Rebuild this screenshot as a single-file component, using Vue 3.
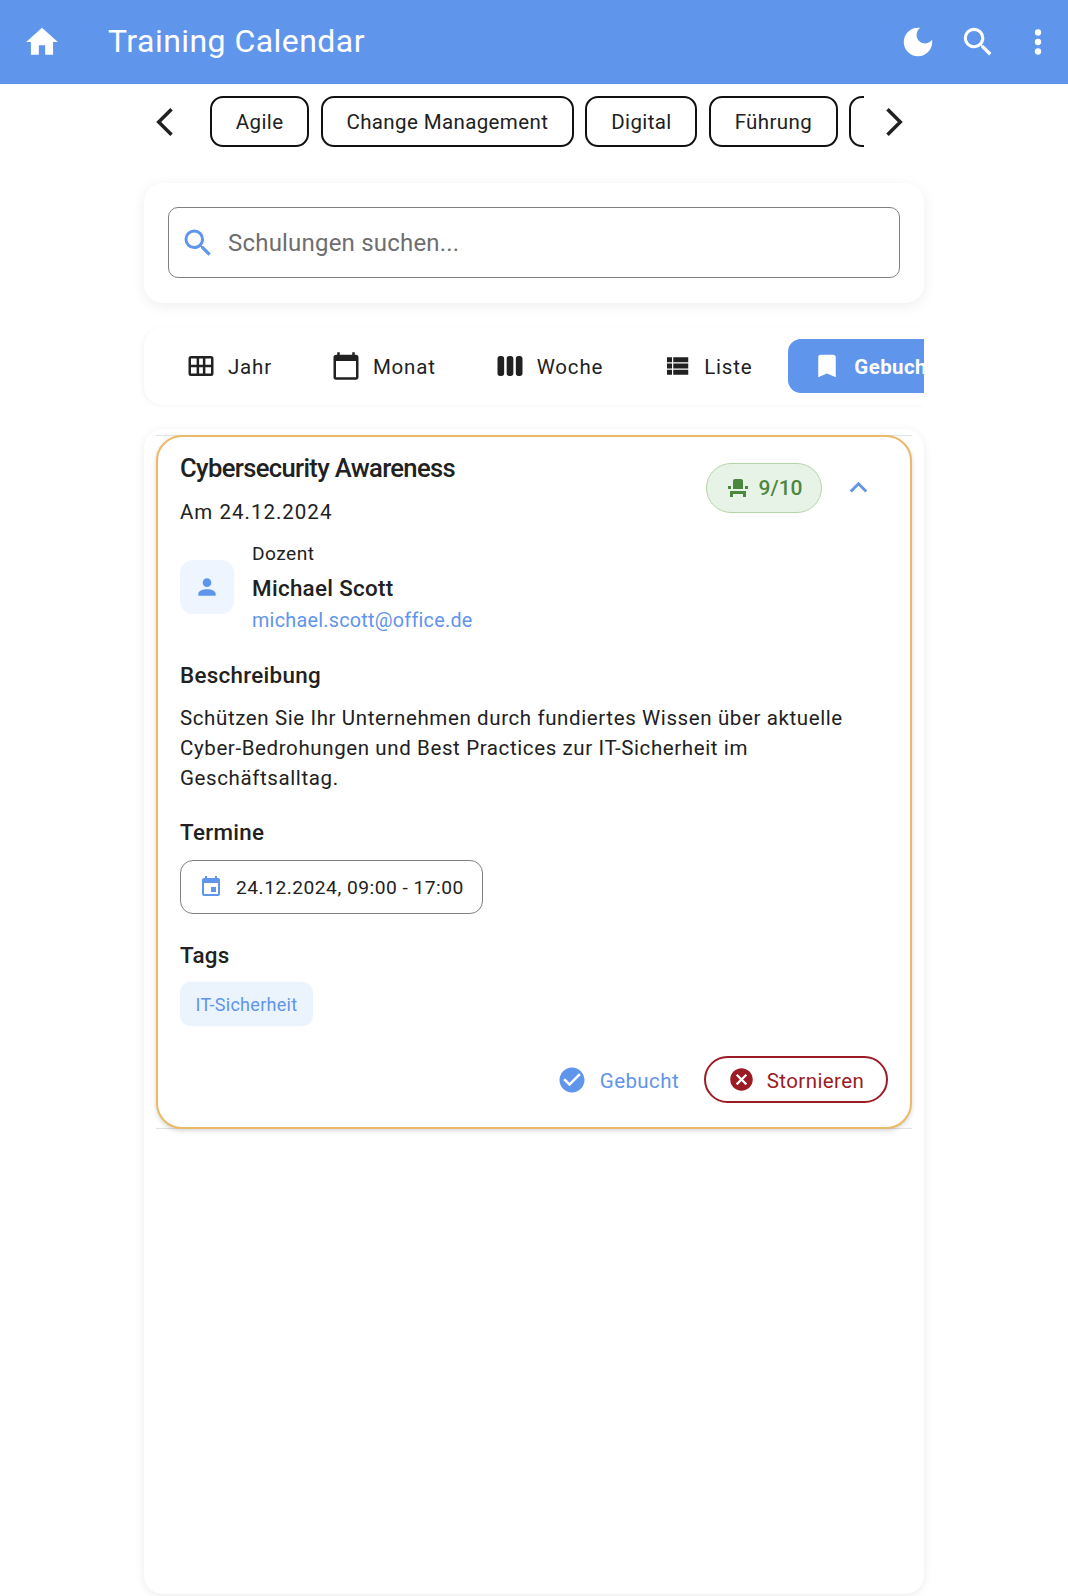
<script setup>
const chips = ['Agile', 'Change Management', 'Digital', 'Führung', 'Kommunikation']
const tabs = [
  { label: 'Jahr', icon: 'M4 4h16a2 2 0 0 1 2 2v12a2 2 0 0 1-2 2H4a2 2 0 0 1-2-2V6a2 2 0 0 1 2-2zm0 2v5h4.5V6H4zm6.5 0v5h3V6h-3zm5 0v5H20V6h-4.500zM4 13v5h4.500v-5H4zm6.500 0v5h3v-5h-3zm5 0v5H20v-5h-4.500z' },
  { label: 'Monat', icon: 'M20 3h-1V1h-2v2H7V1H5v2H4c-1.100 0-2 .9-2 2v16c0 1.100.9 2 2 2h16c1.100 0 2-.9 2-2V5c0-1.100-.9-2-2-2zm0 18H4V8h16v13z' },
  { label: 'Woche', icon: 'M5.330 20H4c-1.100 0-2-.9-2-2V6c0-1.100.9-2 2-2h1.330c1.100 0 2 .9 2 2v12c0 1.100-.9 2-2 2zM22 18V6c0-1.100-.9-2-2-2h-1.330c-1.100 0-2 .9-2 2v12c0 1.100.9 2 2 2H20c1.110 0 2-.9 2-2zm-7.330 0V6c0-1.100-.9-2-2-2h-1.330c-1.100 0-2 .9-2 2v12c0 1.100.9 2 2 2h1.330c1.100 0 2-.9 2-2z' },
  { label: 'Liste', icon: 'M9,5V9H21V5M9,19H21V15H9M9,14H21V10H9M4,9H8V5H4M4,19H8V15H4M4,14H8V10H4V14Z' },
  { label: 'Gebucht', icon: 'M17,3H7A2,2 0 0,0 5,5V21L12,18L19,21V5C19,3.890 18.100,3 17,3Z', active: true },
]
const paths = {
  home: 'M10,20V14H14V20H19V12H22L12,3L2,12H5V20H10Z',
  moon: 'M12 3c-4.970 0-9 4.030-9 9s4.030 9 9 9 9-4.030 9-9c0-.46-.04-.92-.1-1.360-.98 1.370-2.580 2.260-4.400 2.260-2.980 0-5.400-2.420-5.400-5.400 0-1.810.89-3.420 2.260-4.400-.44-.06-.9-.1-1.360-.1z',
  search: 'M9.500,3A6.500,6.500 0 0,1 16,9.500C16,11.110 15.410,12.590 14.440,13.730L14.710,14H15.500L20.500,19L19,20.500L14,15.500V14.710L13.730,14.440C12.590,15.410 11.110,16 9.500,16A6.500,6.500 0 0,1 3,9.500A6.500,6.500 0 0,1 9.500,3M9.500,5C7,5 5,7 5,9.500C5,12 7,14 9.500,14C12,14 14,12 14,9.500C14,7 12,5 9.500,5Z',
  dots: 'M12,16A2,2 0 0,1 14,18A2,2 0 0,1 12,20A2,2 0 0,1 10,18A2,2 0 0,1 12,16M12,10A2,2 0 0,1 14,12A2,2 0 0,1 12,14A2,2 0 0,1 10,12A2,2 0 0,1 12,10M12,4A2,2 0 0,1 14,6A2,2 0 0,1 12,8A2,2 0 0,1 10,6A2,2 0 0,1 12,4Z',
  left: 'M14.800,6.500L9.300,12L14.800,17.500',
  right: 'M9.200,6.500L14.700,12L9.200,17.500',
  seat: 'M4 18v3h3v-3h10v3h3v-6H4zm15-8h3v3h-3zM2 10h3v3H2zm15 3H7V5c0-1.100.9-2 2-2h6c1.100 0 2 .9 2 2v8z',
  up: 'M7.410,15.410L12,10.830L16.590,15.410L18,14L12,8L6,14L7.410,15.410Z',
  person: 'M12,4A4,4 0 0,1 16,8A4,4 0 0,1 12,12A4,4 0 0,1 8,8A4,4 0 0,1 12,4M12,14C16.420,14 20,15.790 20,18V20H4V18C4,15.790 7.580,14 12,14Z',
  calendar: 'M19,19H5V8H19M16,1V3H8V1H6V3H5C3.890,3 3,3.890 3,5V19A2,2 0 0,0 5,21H19A2,2 0 0,0 21,19V5C21,3.890 20.100,3 19,3H18V1M17,12H12V17H17V12Z',
  check: 'M12 2C6.500 2 2 6.500 2 12S6.500 22 12 22 22 17.500 22 12 17.500 2 12 2M10 17L5 12L6.410 10.590L10 14.170L17.590 6.580L19 8L10 17Z',
  cancel: 'M12,2C17.530,2 22,6.470 22,12C22,17.530 17.530,22 12,22C6.470,22 2,17.530 2,12C2,6.470 6.470,2 12,2M15.590,7L12,10.590L8.410,7L7,8.410L10.590,12L7,15.590L8.410,17L12,13.410L15.590,17L17,15.590L13.410,12L17,8.410L15.590,7Z',
}
</script>

<template>
  <div class="page">
    <header class="bar">
      <svg class="bar-icon home" viewBox="0 0 24 24"><path :d="paths.home" /></svg>
      <h1 class="title">Training Calendar</h1>
      <svg class="bar-icon moon" viewBox="0 0 24 24"><path :d="paths.moon" /></svg>
      <svg class="bar-icon" viewBox="0 0 24 24"><path :d="paths.search" /></svg>
      <svg class="bar-icon" viewBox="0 0 24 24"><path :d="paths.dots" /></svg>
    </header>

    <div class="chips-row">
      <svg class="arrow" viewBox="0 0 24 24"><path :d="paths.left" /></svg>
      <div class="chips">
        <div v-for="c in chips" :key="c" class="chip">{{ c }}</div>
      </div>
      <svg class="arrow" viewBox="0 0 24 24"><path :d="paths.right" /></svg>
    </div>

    <main class="content">
      <section class="search-card">
        <div class="field">
          <svg class="field-icon" viewBox="0 0 24 24"><path :d="paths.search" /></svg>
          <span class="placeholder">Schulungen suchen...</span>
        </div>
      </section>

      <nav class="tabs">
        <div v-for="t in tabs" :key="t.label" class="tab" :class="{ active: t.active }">
          <svg class="tab-icon" viewBox="0 0 24 24"><path :d="t.icon" /></svg>
          <span class="tab-label">{{ t.label }}</span>
        </div>
      </nav>

      <section class="list">
        <div class="list-item">
          <article class="card">
            <div class="card-head">
              <div class="head-text">
                <h2 class="card-title">Cybersecurity Awareness</h2>
                <div class="card-date">Am 24.12.2024</div>
              </div>
              <div class="seats">
                <svg class="seat-icon" viewBox="0 0 24 24"><path :d="paths.seat" /></svg>
                <span>9/10</span>
              </div>
              <svg class="collapse" viewBox="0 0 24 24"><path :d="paths.up" /></svg>
            </div>

            <div class="teacher">
              <div class="avatar">
                <svg class="avatar-icon" viewBox="0 0 24 24"><path :d="paths.person" /></svg>
              </div>
              <div class="teacher-text">
                <div class="teacher-label">Dozent</div>
                <div class="teacher-name">Michael Scott</div>
                <div class="teacher-mail">michael.scott@office.de</div>
              </div>
            </div>

            <h3 class="sec sec-desc">Beschreibung</h3>
            <p class="desc">Schützen Sie Ihr Unternehmen durch fundiertes Wissen über aktuelle Cyber-Bedrohungen und Best Practices zur IT-Sicherheit im Geschäftsalltag.</p>

            <h3 class="sec sec-dates">Termine</h3>
            <div class="date-chip">
              <svg class="date-icon" viewBox="0 0 24 24"><path :d="paths.calendar" /></svg>
              <span>24.12.2024, 09:00 - 17:00</span>
            </div>

            <h3 class="sec sec-tags">Tags</h3>
            <div class="tag">IT-Sicherheit</div>

            <div class="actions">
              <div class="booked">
                <svg class="action-icon" viewBox="0 0 24 24"><path :d="paths.check" /></svg>
                <span class="action-label">Gebucht</span>
              </div>
              <div class="cancel">
                <svg class="action-icon cancel-icon" viewBox="0 0 24 24"><path :d="paths.cancel" /></svg>
                <span class="action-label">Stornieren</span>
              </div>
            </div>
          </article>
        </div>
      </section>
    </main>
  </div>
</template>

<style scoped>
.page {
  width: 1068px;
  height: 1596px;
  overflow: hidden;
  background: #fff;
  font-family: Roboto, "Liberation Sans", sans-serif;
  color: #212121;
}
.bar {
  height: 84px;
  background: #5f95eb;
  display: flex;
  align-items: center;
  padding: 0 11px 0 23px;
  color: #fff;
}
.bar-icon {
  width: 38px;
  height: 38px;
  fill: #fff;
  flex: none;
  margin-left: 22px;
}
.bar-icon.home,
.bar-icon.moon {
  margin-left: 0;
}
.title {
  margin: 0 0 2px 47px;
  flex: 1;
  font-size: 32px;
  font-weight: 400;
  line-height: 1;
  letter-spacing: 0.450px;
}
.chips-row {
  height: 51px;
  margin-top: 12px;
  display: flex;
  align-items: center;
  padding-left: 137px;
}
.arrow {
  width: 56px;
  height: 56px;
  fill: none;
  stroke: #212121;
  stroke-width: 1.500;
  flex: none;
}
.chips {
  width: 654px;
  margin: 0 2px 0 17px;
  display: flex;
  gap: 11.400px;
  overflow: hidden;
}
.chip {
  flex: none;
  height: 51px;
  box-sizing: border-box;
  padding: 0 23.800px;
  border: 2px solid #111;
  border-radius: 13px;
  display: flex;
  align-items: center;
  font-size: 20.500px;
  letter-spacing: 0.380px;
}
.content {
  width: 780px;
  margin: 36px 0 0 144px;
}
.search-card {
  height: 120px;
  box-sizing: border-box;
  padding: 24px;
  background: #fff;
  border-radius: 19px;
  box-shadow: 0 3px 14px rgba(0, 0, 0, 0.07);
}
.field {
  height: 71px;
  box-sizing: border-box;
  border: 1.600px solid #808080;
  border-radius: 10px;
  display: flex;
  align-items: center;
  padding-left: 11px;
}
.field-icon {
  width: 36px;
  height: 36px;
  fill: #5f95eb;
  flex: none;
}
.placeholder {
  margin-left: 12px;
  font-size: 24px;
  color: #6e6e6e;
  letter-spacing: 0.2px;
}
.tabs {
  margin-top: 24px;
  height: 78px;
  box-sizing: border-box;
  padding: 12px 0 12px 18px;
  display: flex;
  gap: 11px;
  overflow: hidden;
  background: #fff;
  border-radius: 19px 0 0 19px;
  box-shadow: -2px 1px 4px rgba(0, 0, 0, 0.04);
}
.tab {
  flex: none;
  height: 54px;
  padding: 0 24px;
  display: flex;
  align-items: center;
  gap: 12px;
  font-size: 20.500px;
  letter-spacing: 0.800px;
  border-radius: 13px;
}
.tab-label {
  margin-top: 2px;
}
.tab-icon {
  width: 30px;
  height: 30px;
  fill: #212121;
  flex: none;
}
.tab.active {
  margin-left: 1px;
  background: #5f95eb;
  color: #fff;
  font-weight: 700;
  letter-spacing: 0.400px;
}
.tab.active .tab-icon {
  fill: #fff;
}
.list {
  margin-top: 24px;
  height: 1165px;
  box-sizing: border-box;
  padding: 6px 12px 0;
  background: #fff;
  border-radius: 19px;
  box-shadow: 0 2px 10px rgba(0, 0, 0, 0.08);
}
.list-item {
  border-top: 1px solid #e2e2e2;
  border-bottom: 1px solid #e2e2e2;
}
.card {
  height: 694px;
  margin: -1px 0;
  box-sizing: border-box;
  border: 2.400px solid #ebb968;
  border-radius: 26px;
  padding: 15px 22px 0;
  background: #fff;
  box-shadow: 0 2px 4px rgba(0, 0, 0, 0.16);
}
.card-head {
  display: flex;
  align-items: flex-start;
}
.head-text {
  flex: 1;
}
.card-title {
  margin: 0;
  font-size: 25.600px;
  font-weight: 500;
  line-height: 32px;
  letter-spacing: -0.650px;
}
.card-date {
  margin-top: 13px;
  font-size: 20.500px;
  line-height: 30px;
  letter-spacing: 1px;
}
.seats {
  margin: 11px 19px 0 0;
  width: 116px;
  height: 50px;
  box-sizing: border-box;
  border: 1.600px solid #b2d6a8;
  border-radius: 25px;
  background: #e8f3e8;
  color: #4c8740;
  font-size: 21px;
  font-weight: 500;
  display: flex;
  align-items: center;
  justify-content: center;
  gap: 9px;
}
.seat-icon {
  width: 24px;
  height: 24px;
  fill: #4c8740;
}
.collapse {
  margin: 18px 12px 0 0;
  width: 35px;
  height: 35px;
  fill: #5f95eb;
  flex: none;
}
.teacher {
  margin-top: 13px;
  display: flex;
  align-items: flex-start;
  gap: 18px;
}
.avatar {
  margin-top: 20px;
  width: 54px;
  height: 54px;
  border-radius: 13px;
  background: #eff5fe;
  display: flex;
  align-items: center;
  justify-content: center;
  flex: none;
}
.avatar-icon {
  width: 26px;
  height: 26px;
  fill: #5f95eb;
}
.teacher-label {
  font-size: 19.200px;
  line-height: 28px;
  letter-spacing: 0.450px;
}
.teacher-name {
  margin-top: 5px;
  font-size: 22.400px;
  font-weight: 500;
  line-height: 30px;
  letter-spacing: 0.300px;
}
.teacher-mail {
  margin-top: 2px;
  font-size: 19.800px;
  line-height: 32px;
  color: #5f95eb;
  letter-spacing: 0.250px;
}
.sec {
  margin: 0;
  font-size: 22.400px;
  font-weight: 500;
  line-height: 30px;
  letter-spacing: 0.300px;
}
.sec-desc {
  margin-top: 23px;
}
.desc {
  margin: 14px 0 0;
  font-size: 20.500px;
  line-height: 29.750px;
  letter-spacing: 0.610px;
}
.sec-dates {
  margin-top: 24px;
}
.date-chip {
  margin-top: 13px;
  width: 303px;
  height: 54px;
  box-sizing: border-box;
  border: 1.600px solid #808080;
  border-radius: 13px;
  padding-left: 18px;
  display: flex;
  align-items: center;
  gap: 13px;
  font-size: 19.200px;
  letter-spacing: 0.500px;
}
.date-icon {
  width: 24px;
  height: 24px;
  fill: #5f95eb;
  flex: none;
}
.sec-tags {
  margin-top: 26px;
}
.tag {
  margin-top: 12px;
  width: 133px;
  height: 44px;
  border-radius: 10px;
  background: #ebf3fd;
  color: #5f95eb;
  font-size: 18px;
  letter-spacing: 0.300px;
  display: flex;
  align-items: center;
  justify-content: center;
}
.actions {
  margin-top: 30px;
  display: flex;
  justify-content: flex-end;
  align-items: center;
  gap: 25px;
  font-size: 20.500px;
  letter-spacing: 0.400px;
}
.action-label {
  margin-top: 2px;
}
.booked {
  display: flex;
  align-items: center;
  gap: 13px;
  color: #5f95eb;
}
.cancel {
  width: 184px;
  height: 47px;
  box-sizing: border-box;
  border: 2px solid #9b1c24;
  border-radius: 24px;
  color: #9b1c24;
  display: flex;
  align-items: center;
  justify-content: center;
  gap: 12px;
}
.action-icon {
  width: 30px;
  height: 30px;
  fill: currentColor;
  flex: none;
}
.cancel-icon {
  width: 27px;
  height: 27px;
}
</style>
